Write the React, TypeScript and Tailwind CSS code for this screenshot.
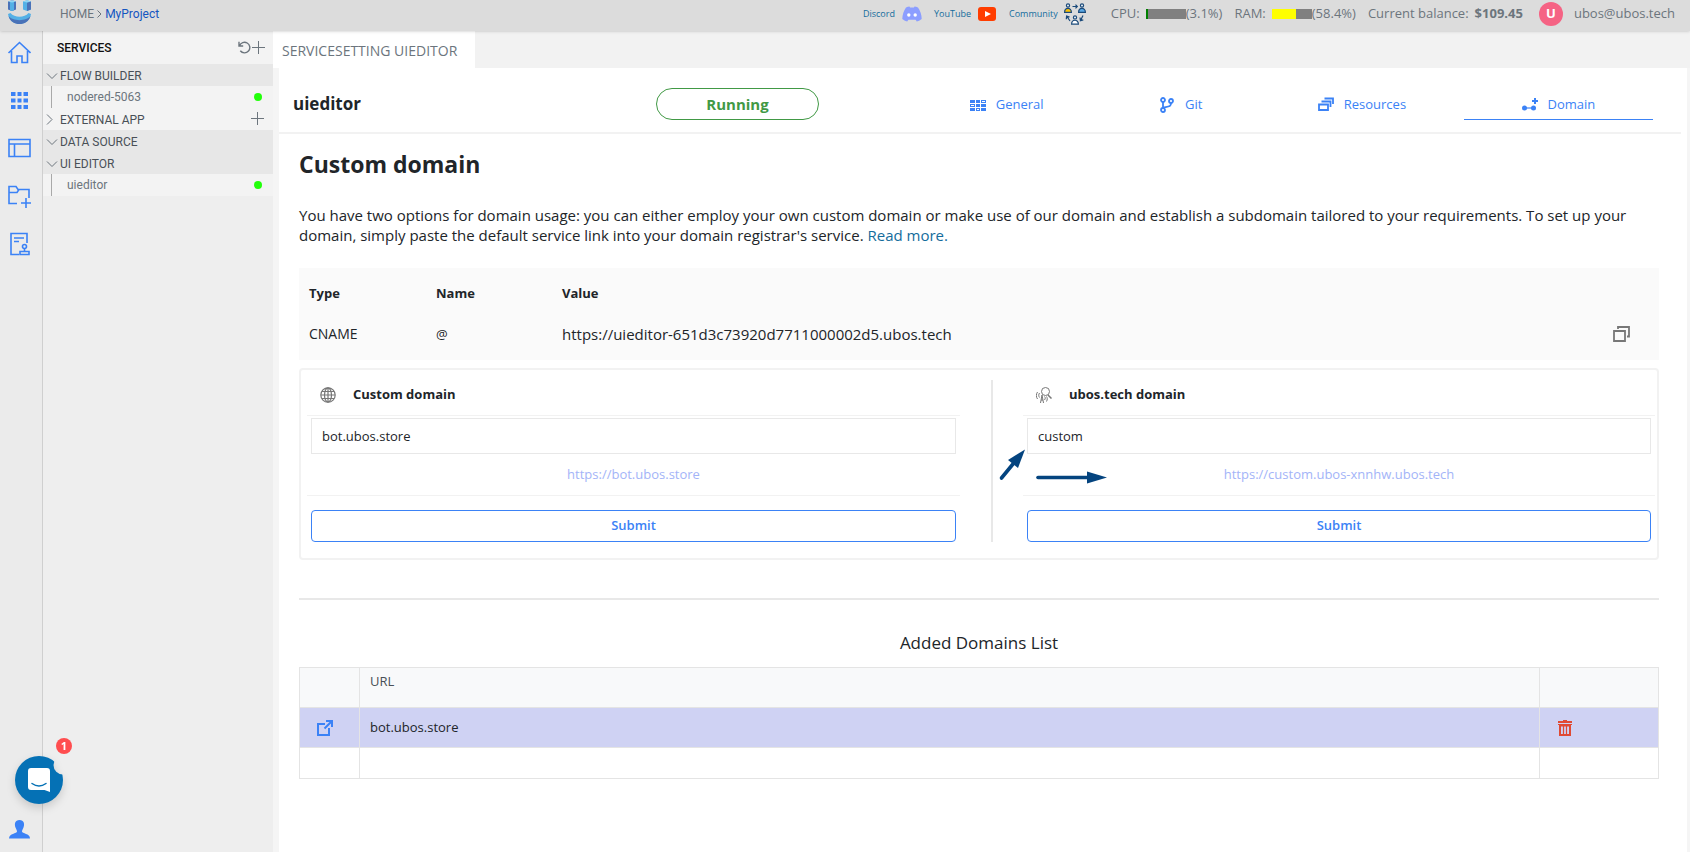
import type { ReactNode } from "react";

const SANS = "font-['Open_Sans','Noto_Sans',sans-serif]";

function Logo() {
  return (
    <svg viewBox="0 0 24 24" className="h-6 w-6" aria-hidden="true">
      <path d="M1 1.500L5 .2l4 1.300v8L5 11 1 9.500z" fill="#4a72b8" />
      <path d="M3 1.500l4-.8v9.800l-2 .5-2-.5z" fill="#53b0e6" />
      <path d="M1 1.500L5 .2l4 1.300-4 1z" fill="#8fd6f5" />
      <path d="M16 1.500L20 .2l4 1.300v8L20 11l-4-1.500z" fill="#53b0e6" />
      <path d="M20 2.500l4-1v8L20 11z" fill="#4a72b8" />
      <path d="M16 1.500L20 .2l4 1.300-4 1z" fill="#8fd6f5" />
      <path d="M1 14l2.500-1c4 5 14 5 18 0l2.500 1c-1 6.500-6 10-11.500 10S2 20.500 1 14z" fill="#53b0e6" />
      <path d="M1.500 16c4 5.500 18 5.500 22 0-1.500 5.500-6 8-11 8S3 21.500 1.500 16z" fill="#4a72b8" />
    </svg>
  );
}

function RailIcon({ label, children }: { label: string; children: ReactNode }) {
  return (
    <button aria-label={label} className="flex h-6 w-6 items-center justify-center text-[#3b82f6]">
      <svg viewBox="0 0 24 24" className="h-6 w-6" fill="none" stroke="currentColor" strokeWidth="1.600">
        {children}
      </svg>
    </button>
  );
}

function Plus() {
  return (
    <svg viewBox="0 0 14 14" className="h-3.5 w-3.5" stroke="#6c757d" fill="none">
      <path d="M6.500 0v13M0 6.500h13" />
    </svg>
  );
}

function GroupRow({ label, open = true, add = false }: { label: string; open?: boolean; add?: boolean }) {
  return (
    <div className={open ? "flex h-[22px] items-center bg-[#e7e7e7] pr-2" : "flex h-[22px] items-center bg-[#f3f3f3] pr-2"}>
      <button className="flex flex-1 items-center pt-0.5 text-left text-xs text-[#495057]">
        <svg viewBox="0 0 17 12" className="h-3 w-[17px]" fill="none" stroke="#6c757d">
          {open ? <path d="M4 3.500l5 5 5-5" /> : <path d="M4 .5l5 5-5 5" />}
        </svg>
        {label}
      </button>
      {add && (
        <button aria-label={"Add " + label}>
          <Plus />
        </button>
      )}
    </div>
  );
}

function ServiceRow({ label }: { label: string }) {
  return (
    <div className="flex h-[22px] bg-[#f3f3f3] pl-2">
      <a href="#" className="flex flex-1 items-center border-l border-[#a9a9a9] pr-[11px] pl-[15px] text-xs text-[#6c757d]">
        <span className="flex-1">{label}</span>
        <span className="h-2 w-2 rounded-full bg-[#22ff0a]" />
      </a>
    </div>
  );
}

function Meter({ label, value, fill, color }: { label: string; value: string; fill: number; color: string }) {
  return (
    <div className="flex items-center">
      <span>{label}</span>
      <span className="ml-1.5 flex h-2.5 w-10 bg-[#808080]">
        <span className={color} style={{ width: fill + "%" }} />
      </span>
      <span>({value})</span>
    </div>
  );
}

function CommunityIcon() {
  const person = (x: number, y: number, c: string) => (
    <g transform={`translate(${x} ${y})`}>
      <circle cx="4" cy="2.200" r="1.600" fill="#e9f1f8" />
      <path d="M.6 9c0-5.300 6.800-5.300 6.800 0z" fill={c} />
    </g>
  );
  return (
    <svg viewBox="0 0 22 22" className="h-[22px] w-[22px]" fill="none" stroke="#1b4a7a" strokeWidth="1.200" aria-hidden="true">
      {person(0, 0.3, "#ffc400")}
      {person(14, 0.3, "#5aa9e6")}
      {person(7, 12.2, "#fff")}
      <path d="M8.500 3.500h4.800M11.500 1.700l1.800 1.800-1.800 1.800M6 18L3 13.500M2.300 16.300L2.600 13l3 1M19 12.500L16.500 17.500M16 14.500l.4 3.200 2.900-.8" />
    </svg>
  );
}

function TabLink({ label, active = false, children }: { label: string; active?: boolean; children: ReactNode }) {
  return (
    <a
      href="#"
      className={
        active
          ? "flex h-8 flex-auto items-center justify-center gap-2.5 border-b border-[#3b82f6] pt-0.5"
          : "flex h-8 flex-auto items-center justify-center gap-2.5 border-b border-transparent pt-0.5"
      }
    >
      <svg viewBox="0 0 16 16" className="h-4 w-4" fill="none" stroke="currentColor" strokeWidth="2">
        {children}
      </svg>
      {label}
    </a>
  );
}

function DomainForm({ id, title, icon, value, url, children }: { id: string; title: string; icon: ReactNode; value: string; url: string; children?: ReactNode }) {
  return (
    <form className="relative flex min-w-0 flex-col text-[13px]" onSubmit={(e) => e.preventDefault()}>
      <div className="flex h-9 items-center gap-[17px] border-b border-[#f2f2f2] pb-1.5 pl-[13px]">
        {icon}
        <label htmlFor={id} className="font-bold">{title}</label>
      </div>
      <div className="px-1 pt-0.5">
        <input id={id} defaultValue={value} className="h-9 w-full border border-[#e8e8e8] bg-white px-2.5 outline-none" />
      </div>
      <div className="flex h-[42px] items-center justify-center border-b border-[#f2f2f2]">
        <a href="#" className="text-[#a3b4f8]">{url}</a>
      </div>
      <button className="mx-1 mt-3.5 h-8 rounded border border-[#3b82f6] font-semibold text-[#3b82f6]">Submit</button>
      {children}
    </form>
  );
}

export default function App() {
  return (
    <div className={"flex min-h-screen flex-col bg-[#eee] text-[13px] text-[#212529] " + SANS}>
      <header className="relative z-10 flex h-[31px] items-start bg-[#dcdcdc] pr-[15px] pl-[7px] text-[#6c757d] shadow-sm">
        <Logo />
        <nav aria-label="Breadcrumb" className="ml-[29px] flex h-7 items-center gap-[3px] font-[Roboto,sans-serif] text-xs">
          <a href="#">HOME</a>
          <svg viewBox="0 0 5 8" className="h-2 w-[5px]" fill="none" stroke="#6c757d"><path d="M.5.5L4 4 .5 7.500" /></svg>
          <a href="#" className="text-[#1455c0]">MyProject</a>
        </nav>
        <div className="ml-auto flex h-7 items-center">
          <div className="flex items-center text-[9px] text-[#146c9c]">
            <a href="#" className="flex items-center gap-[7px]">
              Discord
              <svg viewBox="0 0 20 16" className="h-4 w-5" aria-hidden="true">
                <path d="M4 1.500Q6 .5 7.500.5l.6 1h3.800l.6-1q1.500 0 3.500 1 3.500 5 3.700 11.500Q17 15 14.800 15.500l-1.200-1.800H6.400L5.200 15.500Q3 15 .3 13 .5 6.500 4 1.500z" fill="#8c9eff" />
                <circle cx="6.800" cy="9" r="1.700" fill="#fff" /><circle cx="13.200" cy="9" r="1.700" fill="#fff" />
              </svg>
            </a>
            <a href="#" className="ml-3 flex items-center gap-[7px]">
              YouTube
              <svg viewBox="0 0 18 14" className="h-3.5 w-[18px]" aria-hidden="true">
                <rect width="18" height="14" rx="3" fill="#ff3d00" /><path d="M7 4l6 3-6 3z" fill="#fff" />
              </svg>
            </a>
            <a href="#" className="ml-[13px] flex items-center gap-1.5">
              Community
              <CommunityIcon />
            </a>
          </div>
          <div className="ml-[25px] flex items-center gap-3">
            <Meter label="CPU:" value="3.1%" fill={5} color="bg-[#008000]" />
            <Meter label="RAM:" value="58.4%" fill={60} color="bg-[#ffff00]" />
            <span className="flex items-center gap-1.5">Current balance: <b>$109.45</b></span>
          </div>
          <span className="mr-[11px] ml-4 flex h-6 w-6 items-center justify-center rounded-full bg-[#f56384] font-bold text-white">U</span>
          <span>ubos@ubos.tech</span>
        </div>
      </header>

      <div className="flex flex-1">
        <aside className="flex w-[43px] flex-col items-start gap-6 border-r border-[#cfcfcf] bg-[#ebebeb] pt-[9px] pb-[10px] pl-[7px]">
          <RailIcon label="Home"><path d="M1.500 13L12.500 2.500 23.500 13M4.500 11v11.500h5.500V16h5v6.500h5.500V11" /></RailIcon>
          <RailIcon label="Applications">
            <path fill="currentColor" stroke="none" d="M4 4h4.500v4H4zM10.500 4h4v4h-4zM16.500 4H21v4h-4.500zM4 10.500h4.500v4H4zM10.500 10.500h4v4h-4zM16.500 10.500H21v4h-4.500zM4 17h4.500v4H4zM10.500 17h4v4h-4zM16.500 17H21v4h-4.500z" />
          </RailIcon>
          <RailIcon label="Layout"><path d="M2 3.500h21v17H2zM2 8h21M7.500 8v12.500" /></RailIcon>
          <RailIcon label="New folder"><path d="M10 19.500H2V2.500h7l2 3h11V14M2 8.500h8l2-3M14 19h10M19 14v10" /></RailIcon>
          <RailIcon label="Templates"><path d="M12 22.500H4V1.500h16V11M7 6h10M7 9.500h5M13 22.500h9v-3h-9zM17.500 19v-3" /><circle cx="17.500" cy="14.500" r="2" /></RailIcon>
          <button aria-label="Account" className="mt-auto text-[#3b82f6]">
            <svg viewBox="0 0 24 24" className="h-6 w-6" fill="currentColor">
              <path d="M12.500 2c4.500 0 5.500 4 3.800 8-.7 1.700-1.300 2.200-1.300 3.500 0 2 8 2 8 7H2c0-5 8-5 8-7 0-1.300-.6-1.800-1.300-3.500C7 6 8 2 12.500 2z" />
            </svg>
          </button>
        </aside>

        <nav aria-label="Services" className="w-[230px] shrink-0 font-[Roboto,sans-serif]">
          <div className="flex h-[33px] items-center bg-[#f3f3f3] pr-[7px] pl-3.5">
            <h2 className="flex-1 text-xs font-medium text-[#111]">SERVICES</h2>
            <button aria-label="Refresh" className="mr-px">
              <svg viewBox="0 0 13 13" className="h-[13px] w-[13px]" fill="none" stroke="#6c757d" strokeWidth="1.400"><path d="M1 .8v4.200h4.200M1.500 4.800a5.300 5.300 0 1 1 .8 5" /></svg>
            </button>
            <button aria-label="Add service"><Plus /></button>
          </div>
          <GroupRow label="FLOW BUILDER" />
          <ServiceRow label="nodered-5063" />
          <GroupRow label="EXTERNAL APP" open={false} add />
          <GroupRow label="DATA SOURCE" />
          <GroupRow label="UI EDITOR" />
          <ServiceRow label="uieditor" />
        </nav>

        <div className="flex min-w-0 flex-1 flex-col bg-[#f5f5f5]">
          <div className="flex h-[37px] bg-[#f2f2f2]">
            <button className="w-[202px] bg-white pt-0.5 pl-[9px] text-left text-sm text-[#6c757d]">SERVICESETTING UIEDITOR</button>
          </div>
          <main className="mr-[3px] ml-1.5 flex-1 bg-white">
            <div className="mr-1.5 flex h-[66px] items-center border-b-2 border-[#f2f2f2] pt-2 pr-7 pl-3.5">
              <h1 className="w-[363px] text-[17px] font-bold">uieditor</h1>
              <button className="h-8 w-[163px] rounded-full border border-[#419945] text-[15px] font-bold text-[#419945]">Running</button>
              <nav aria-label="Service settings" className="ml-[93px] flex flex-1 text-[#3b82f6]">
                <TabLink label="General">
                  <path fill="currentColor" stroke="none" fillRule="evenodd" d="M0 3h5v3H0zM6 3h4v3H6zM11 3h5v3h-5zm1 1v1h3V4zM0 7h5v3H0zm1 1v1h3V8zM6 7h4v3H6zM11 7h5v3h-5zM0 11h5v3H0zM6 11h4v3H6zm1 1v1h2v-1zM11 11h5v3h-5z" />
                </TabLink>
                <TabLink label="Git">
                  <g strokeWidth="1.800"><circle cx="4" cy="3" r="2" /><circle cx="12" cy="4" r="2" /><circle cx="4" cy="13" r="2" /><path d="M4 5v6M12 6c0 4-2 3.500-8 4.500" /></g>
                </TabLink>
                <TabLink label="Resources">
                  <path strokeWidth="1.800" d="M1 7.500h9v5.500H1zM3.500 4.500h9v5.500M6.500 1.500H15v5.500" />
                </TabLink>
                <TabLink label="Domain" active>
                  <path d="M3 11h9" strokeWidth="1.200" /><circle cx="2.500" cy="11" r="2.500" fill="currentColor" stroke="none" /><circle cx="11.500" cy="11" r="2.500" fill="currentColor" stroke="none" /><path d="M13 1v6M10 4h6" />
                </TabLink>
              </nav>
            </div>

            <div className="mr-7 ml-5">
              <h2 className="pt-3.5 text-[23px] leading-8 font-bold">Custom domain</h2>
              <p className="pt-[25px] text-[15px] leading-5">
                You have two options for domain usage: you can either employ your own custom domain or make use of our domain and establish a subdomain tailored to your requirements. To set up your domain, simply paste the default service link into your domain registrar's service. <a href="#" className="text-[#146c9c]">Read more.</a>
              </p>

              <table className="mt-[23px] w-full table-fixed bg-[#fafafa] text-left text-[13px]">
                <thead>
                  <tr className="h-[52px]">
                    <th className="w-[127px] pl-2.5">Type</th>
                    <th className="w-[126px] pl-2.5">Name</th>
                    <th className="pl-2.5">Value</th>
                    <th className="w-[63px]" />
                  </tr>
                </thead>
                <tbody>
                  <tr className="h-10 align-top leading-5">
                    <td className="pt-1 pl-2.5 text-sm leading-5">CNAME</td>
                    <td className="pt-1 pl-2.5">@</td>
                    <td className="pt-1 pl-2.5 text-[15px] leading-5">https://uieditor-651d3c73920d7711000002d5.ubos.tech</td>
                    <td className="pt-1 pl-4">
                      <button aria-label="Copy" className="block pt-px text-[#777]">
                        <svg viewBox="0 0 18 18" className="h-[18px] w-[18px]" fill="none" stroke="currentColor" strokeWidth="1.800"><path d="M2 6h11v10H2zM6 4V2h11v9.500h-2" /></svg>
                      </button>
                    </td>
                  </tr>
                </tbody>
              </table>

              <section className="mt-2 grid grid-cols-[653fr_63px_632fr] rounded border-2 border-[#f2f2f2] pt-2.5 pr-0.5 pb-4 pl-1.5">
                <DomainForm
                  id="custom-domain"
                  title="Custom domain"
                  value="bot.ubos.store"
                  url="https://bot.ubos.store"
                  icon={<svg viewBox="0 0 16 16" className="h-4 w-4" fill="none" stroke="#777" strokeWidth="1.200" aria-hidden="true"><circle cx="8" cy="8" r="7.200" /><ellipse cx="8" cy="8" rx="3.500" ry="7.200" /><path d="M8 1v14M1 8h14M2 4.500h12M2 11.500h12" /></svg>}
                />
                <div className="mx-auto w-0.5 bg-[#e8e8e8]" />
                <DomainForm
                  id="ubos-domain"
                  title="ubos.tech domain"
                  value="custom"
                  url="https://custom.ubos-xnnhw.ubos.tech"
                  icon={<svg viewBox="0 0 16 16" className="h-4 w-4" fill="none" stroke="#777" aria-hidden="true"><circle cx="9.500" cy="4.500" r="4" /><path d="M12 8l3.500 3.500" strokeWidth="1.500" /><path d="M4.500 16L6 8l1.500 8M5 13h2M3.500 6c-1 1.500-1 3 0 4.500M1.500 5c-1.500 2-1.500 5 0 7M8.500 9.500c1 1 1 2 0 3.500M10.500 9.500c1 1.500 1 3 0 5" /></svg>}
                >
                  <svg viewBox="0 0 112 36" className="pointer-events-none absolute top-[68px] -left-7 h-9 w-28" aria-hidden="true">
                    <path d="M6.500 30L18 16" stroke="#04447f" strokeWidth="3.600" strokeLinecap="round" />
                    <path d="M30 1.500L13 12l10 8z" fill="#04447f" />
                    <path d="M43 29.500h50" stroke="#04447f" strokeWidth="3.600" strokeLinecap="round" />
                    <path d="M92 23.500l20 6-20 6z" fill="#04447f" />
                  </svg>
                </DomainForm>
              </section>

              <hr className="mt-[38px] border-t-2 border-[#e8e8e8]" />

              <h3 className="mt-[31px] text-center text-[17px] leading-6">Added Domains List</h3>
              <table className="mt-3 w-full table-fixed border-collapse text-left text-[13px]">
                <thead>
                  <tr className="h-10 bg-[#f8f9fa] align-top text-[#495057]">
                    <th className="w-[60px] border border-[#e4e4e4]" />
                    <th className="border border-[#e4e4e4] pt-1 pl-2.5 font-normal">URL</th>
                    <th className="w-[119px] border border-[#e4e4e4]" />
                  </tr>
                </thead>
                <tbody>
                  <tr className="h-10 bg-[#cfd2f3]">
                    <td className="border border-[#e4e4e4] pl-[17px]">
                      <a href="#" aria-label="Open bot.ubos.store" className="block text-[#3b82f6]">
                        <svg viewBox="0 0 16 16" className="h-4 w-4" fill="none" stroke="currentColor" strokeWidth="2"><path d="M8 4H1v11h11V8M7.500 8.500L14 2M9 1h6v6" /></svg>
                      </a>
                    </td>
                    <td className="border border-[#e4e4e4] pl-2.5">bot.ubos.store</td>
                    <td className="border border-[#e4e4e4] pl-[18px]">
                      <button aria-label="Delete" className="block text-[#e04a34]">
                        <svg viewBox="0 0 14 16" className="h-4 w-3.5" fill="none" stroke="currentColor" strokeWidth="2"><path d="M0 2h14M5 .5h4" /><path d="M0 4.500h14" strokeWidth="1" /><path d="M2 4.500V15h10V4.500M2 5.500h10" /><path d="M5.500 6v8M8.500 6v8" strokeWidth="1.200" /></svg>
                      </button>
                    </td>
                  </tr>
                  <tr className="h-[31px]">
                    <td className="border border-[#e4e4e4]" />
                    <td className="border border-[#e4e4e4]" />
                    <td className="border border-[#e4e4e4]" />
                  </tr>
                </tbody>
              </table>
            </div>
          </main>
        </div>
      </div>

      <button aria-label="Open chat, 1 unread message" className="fixed bottom-12 left-[15px] z-20 h-12 w-12">
        <svg viewBox="0 0 48 48" className="h-12 w-12 drop-shadow-lg">
          <mask id="notch"><rect width="48" height="48" fill="#fff" /><circle cx="48" cy="9" r="9.500" fill="#000" /></mask>
          <circle cx="24" cy="24" r="24" fill="#0571b5" mask="url(#notch)" />
          <path d="M16 12h16q3 0 3 3v21l-5.500-2H16q-3 0-3-3V15q0-3 3-3z" fill="#fff" />
          <path d="M17 27.500q7 5 14 0" fill="none" stroke="#0571b5" strokeWidth="1.500" strokeLinecap="round" />
        </svg>
        <span className="absolute -top-[18px] left-[41px] flex h-4 w-4 items-center justify-center rounded-full bg-[#ff4d4f] text-[11px] font-bold text-white">1</span>
      </button>
    </div>
  );
}
